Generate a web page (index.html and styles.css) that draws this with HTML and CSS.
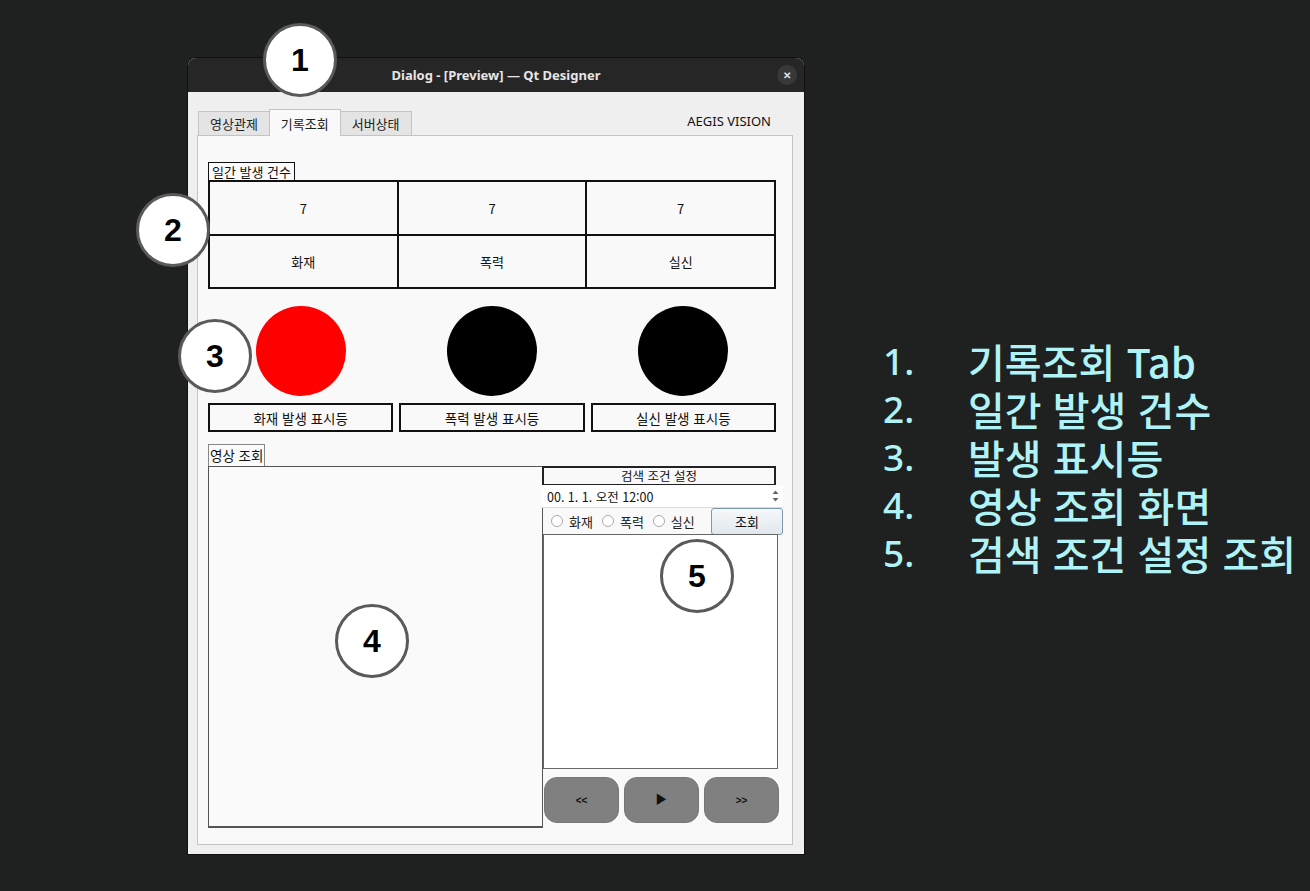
FILE: index.html
```html
<!DOCTYPE html>
<html lang="ko">
<head>
    <meta charset="UTF-8">
    <meta name="viewport" content="width=device-width, initial-scale=1.0">
    <title>기록조회 미리보기</title>
    <link rel="stylesheet" href="styles.css">
</head>
<body>
    <div class="janela">
        <div class="titulo">
            <span>Dialog - [Preview] — Qt Designer</span>
            <div class="fechar">&#x2715;</div>
        </div>

        <div class="corpo">
            <div class="abas">
                <div class="aba">영상관제</div>
                <div class="aba ativa">기록조회</div>
                <div class="aba">서버상태</div>
                <div class="marca">AEGIS VISION</div>
            </div>

            <div class="painel">
                <div class="rotulo">일간 발생 건수</div>
                <div class="tabela">
                    <div class="celula">7</div>
                    <div class="celula">7</div>
                    <div class="celula">7</div>
                    <div class="celula">화재</div>
                    <div class="celula">폭력</div>
                    <div class="celula">실신</div>
                </div>

                <div class="luzes">
                    <div class="luz">
                        <div class="bola vermelha"></div>
                        <div class="legenda">화재 발생 표시등</div>
                    </div>
                    <div class="luz">
                        <div class="bola"></div>
                        <div class="legenda">폭력 발생 표시등</div>
                    </div>
                    <div class="luz">
                        <div class="bola"></div>
                        <div class="legenda">실신 발생 표시등</div>
                    </div>
                </div>

                <div class="rotulo video">영상 조회</div>
                <div class="baixo">
                    <div class="tela"></div>
                    <div class="busca">
                        <div class="cabeca">검색 조건 설정</div>
                        <div class="data">
                            <span>00. 1. 1. 오전 12:00</span>
                            <div class="setas">
                                <svg width="7" height="14" viewBox="0 0 7 14">
                                    <path d="M0.5 5 L3.5 1.5 L6.5 5 Z" fill="#666"/>
                                    <path d="M0.5 9 L3.5 12.5 L6.5 9 Z" fill="#666"/>
                                </svg>
                            </div>
                        </div>
                        <div class="filtros">
                            <label class="opcao"><span class="radio"></span>화재</label>
                            <label class="opcao"><span class="radio"></span>폭력</label>
                            <label class="opcao"><span class="radio"></span>실신</label>
                            <button class="consultar" type="button">조회</button>
                        </div>
                        <div class="lista"></div>
                        <div class="controles">
                            <button class="btn" type="button">&lt;&lt;</button>
                            <button class="btn play" type="button">&#9654;</button>
                            <button class="btn" type="button">&gt;&gt;</button>
                        </div>
                    </div>
                </div>
            </div>
        </div>

        <div class="marcador m1">1</div>
        <div class="marcador m2">2</div>
        <div class="marcador m3">3</div>
        <div class="marcador m4">4</div>
        <div class="marcador m5">5</div>
    </div>

    <ol class="notas">
        <li><span class="num">1.</span>기록조회 Tab</li>
        <li><span class="num">2.</span>일간 발생 건수</li>
        <li><span class="num">3.</span>발생 표시등</li>
        <li><span class="num">4.</span>영상 조회 화면</li>
        <li><span class="num">5.</span>검색 조건 설정 조회</li>
    </ol>
</body>
</html>
```

FILE: styles.css
```css
body {
    margin: 0;
    padding: 0;
    background-color: #1f2020;
    font-family: "Noto Sans CJK KR", "Noto Sans", sans-serif;
    display: flex;
    align-items: flex-start;
    width: 1310px;
    height: 891px;
    overflow: hidden;
}

.janela {
    position: relative;
    margin: 58px 0 0 188px;
    width: 616px;
    height: 796px;
    background: #efefef;
    border-radius: 8px 8px 0 0;
    box-shadow: 0 0 0 1px #111;
}

.titulo {
    height: 34px;
    background: #262626;
    border-radius: 8px 8px 0 0;
    color: #e6e6e6;
    font-family: "Noto Sans", sans-serif;
    font-weight: bold;
    font-size: 13px;
    display: flex;
    align-items: center;
    justify-content: center;
    position: relative;
}

.fechar {
    position: absolute;
    right: 7px;
    top: 7px;
    width: 20px;
    height: 20px;
    border-radius: 50%;
    background: #383838;
    color: #e0e0e0;
    font-size: 10px;
    display: flex;
    align-items: center;
    justify-content: center;
}

.corpo {
    padding: 16px 11px 16px 9px;
}

.abas {
    display: flex;
    align-items: flex-end;
    height: 27px;
    padding-left: 1px;
}

.aba {
    height: 23px;
    padding: 0 11px;
    background: #e4e4e4;
    border: 1px solid #c4c4c4;
    border-bottom: none;
    font-size: 13px;
    color: #222;
    display: flex;
    align-items: center;
    margin-right: -1px;
}

.aba.ativa {
    height: 26px;
    background: #f9f9f9;
    position: relative;
    z-index: 2;
    margin-bottom: -1px;
}

.marca {
    margin-left: auto;
    margin-right: 22px;
    align-self: center;
    font-family: "Noto Sans", sans-serif;
    font-size: 13px;
    color: #111;
    padding-bottom: 2px;
}

.painel {
    height: 682px;
    background: #f9f9f9;
    border: 1px solid #c4c4c4;
    padding: 26px 9px 0 10px;
}

.rotulo {
    width: fit-content;
    border: 1px solid #111;
    border-bottom: none;
    font-size: 13px;
    line-height: 17px;
    padding: 0 3px;
    color: #111;
    background: #fbfbfb;
}

.tabela {
    width: 566px;
    display: grid;
    grid-template-columns: repeat(3, 1fr);
    grid-template-rows: 54px 53px;
    border: 1px solid #111;
}

.celula {
    border: 1px solid #111;
    display: flex;
    align-items: center;
    justify-content: center;
    font-size: 13px;
    color: #111;
}

.luzes {
    width: 568px;
    display: flex;
    gap: 6px;
    margin-top: 17px;
}

.luz {
    flex: 1;
    display: flex;
    flex-direction: column;
    align-items: center;
}

.bola {
    width: 90px;
    height: 90px;
    border-radius: 50%;
    background: #000;
}

.bola.vermelha {
    background: #ff0000;
}

.legenda {
    margin-top: 7px;
    width: 100%;
    box-sizing: border-box;
    height: 29px;
    border: 2px solid #111;
    display: flex;
    align-items: center;
    justify-content: center;
    font-size: 13.5px;
    color: #111;
}

.rotulo.video {
    margin-top: 12px;
    border-color: #888;
    font-size: 13.5px;
    line-height: 21px;
    padding: 0 1px;
}

.baixo {
    display: flex;
    height: 362px;
}

.tela {
    width: 333px;
    flex-shrink: 0;
    background: #fafafa;
    border: 1px solid #555;
    border-bottom-width: 2px;
}

.busca {
    width: 241px;
    flex-shrink: 0;
    display: flex;
    flex-direction: column;
    margin-left: -1px;
}

.cabeca {
    width: 234px;
    box-sizing: border-box;
    height: 19px;
    border: 2px solid #222;
    border-bottom-width: 1px;
    font-size: 12.5px;
    text-align: center;
    line-height: 15px;
    color: #111;
}

.data {
    height: 22px;
    background: #fff;
    border-bottom: 1px solid #ddd;
    display: flex;
    align-items: center;
    justify-content: space-between;
    padding: 0 4px 0 5px;
    font-size: 12.5px;
    color: #111;
}

.setas {
    display: flex;
    align-items: center;
}

.filtros {
    height: 26px;
    display: flex;
    align-items: center;
    padding-left: 9px;
}

.opcao {
    display: flex;
    align-items: center;
    font-size: 13px;
    color: #222;
    margin-right: 9px;
}

.radio {
    width: 10px;
    height: 10px;
    border: 1px solid #aaa;
    border-radius: 50%;
    background: #fff;
    margin-right: 6px;
}

.consultar {
    margin-left: auto;
    width: 72px;
    height: 27px;
    margin-top: 1px;
    border: 1px solid #7d97ad;
    border-radius: 3px;
    background: linear-gradient(#f6f8fa, #e1e8ee);
    font-family: inherit;
    font-size: 13px;
    color: #111;
}

.lista {
    width: 233px;
    height: 233px;
    margin-left: 1px;
    background: #fff;
    border: 1px solid #666;
}

.controles {
    display: flex;
    gap: 5px;
    margin-top: 8px;
    padding-left: 2px;
}

.btn {
    width: 75px;
    height: 46px;
    background: #808080;
    border: 1px solid #777;
    border-radius: 13px;
    font-size: 10px;
    color: #111;
    font-weight: bold;
}

.btn.play {
    font-size: 13px;
}

.marcador {
    position: absolute;
    width: 68px;
    height: 68px;
    border: 3px solid #5a5a5a;
    border-radius: 50%;
    background: #fff;
    display: flex;
    align-items: center;
    justify-content: center;
    font-family: "Liberation Sans", Arial, sans-serif;
    font-weight: bold;
    font-size: 32px;
    color: #000;
    z-index: 5;
}

.m1 { left: 75px; top: -35px; }
.m2 { left: -52px; top: 135px; }
.m3 { left: -10px; top: 261px; }
.m4 { left: 147px; top: 546px; }
.m5 { left: 472px; top: 481px; }

.notas {
    list-style: none;
    margin: 337px 0 0 79px;
    padding: 0;
    color: #aff3f6;
    font-size: 40px;
    line-height: 48px;
    font-weight: 500;
}

.notas li {
    display: flex;
    align-items: center;
    height: 48px;
    white-space: nowrap;
}

.num {
    width: 85px;
    font-family: "Noto Sans", sans-serif;
    font-size: 37px;
}
```
